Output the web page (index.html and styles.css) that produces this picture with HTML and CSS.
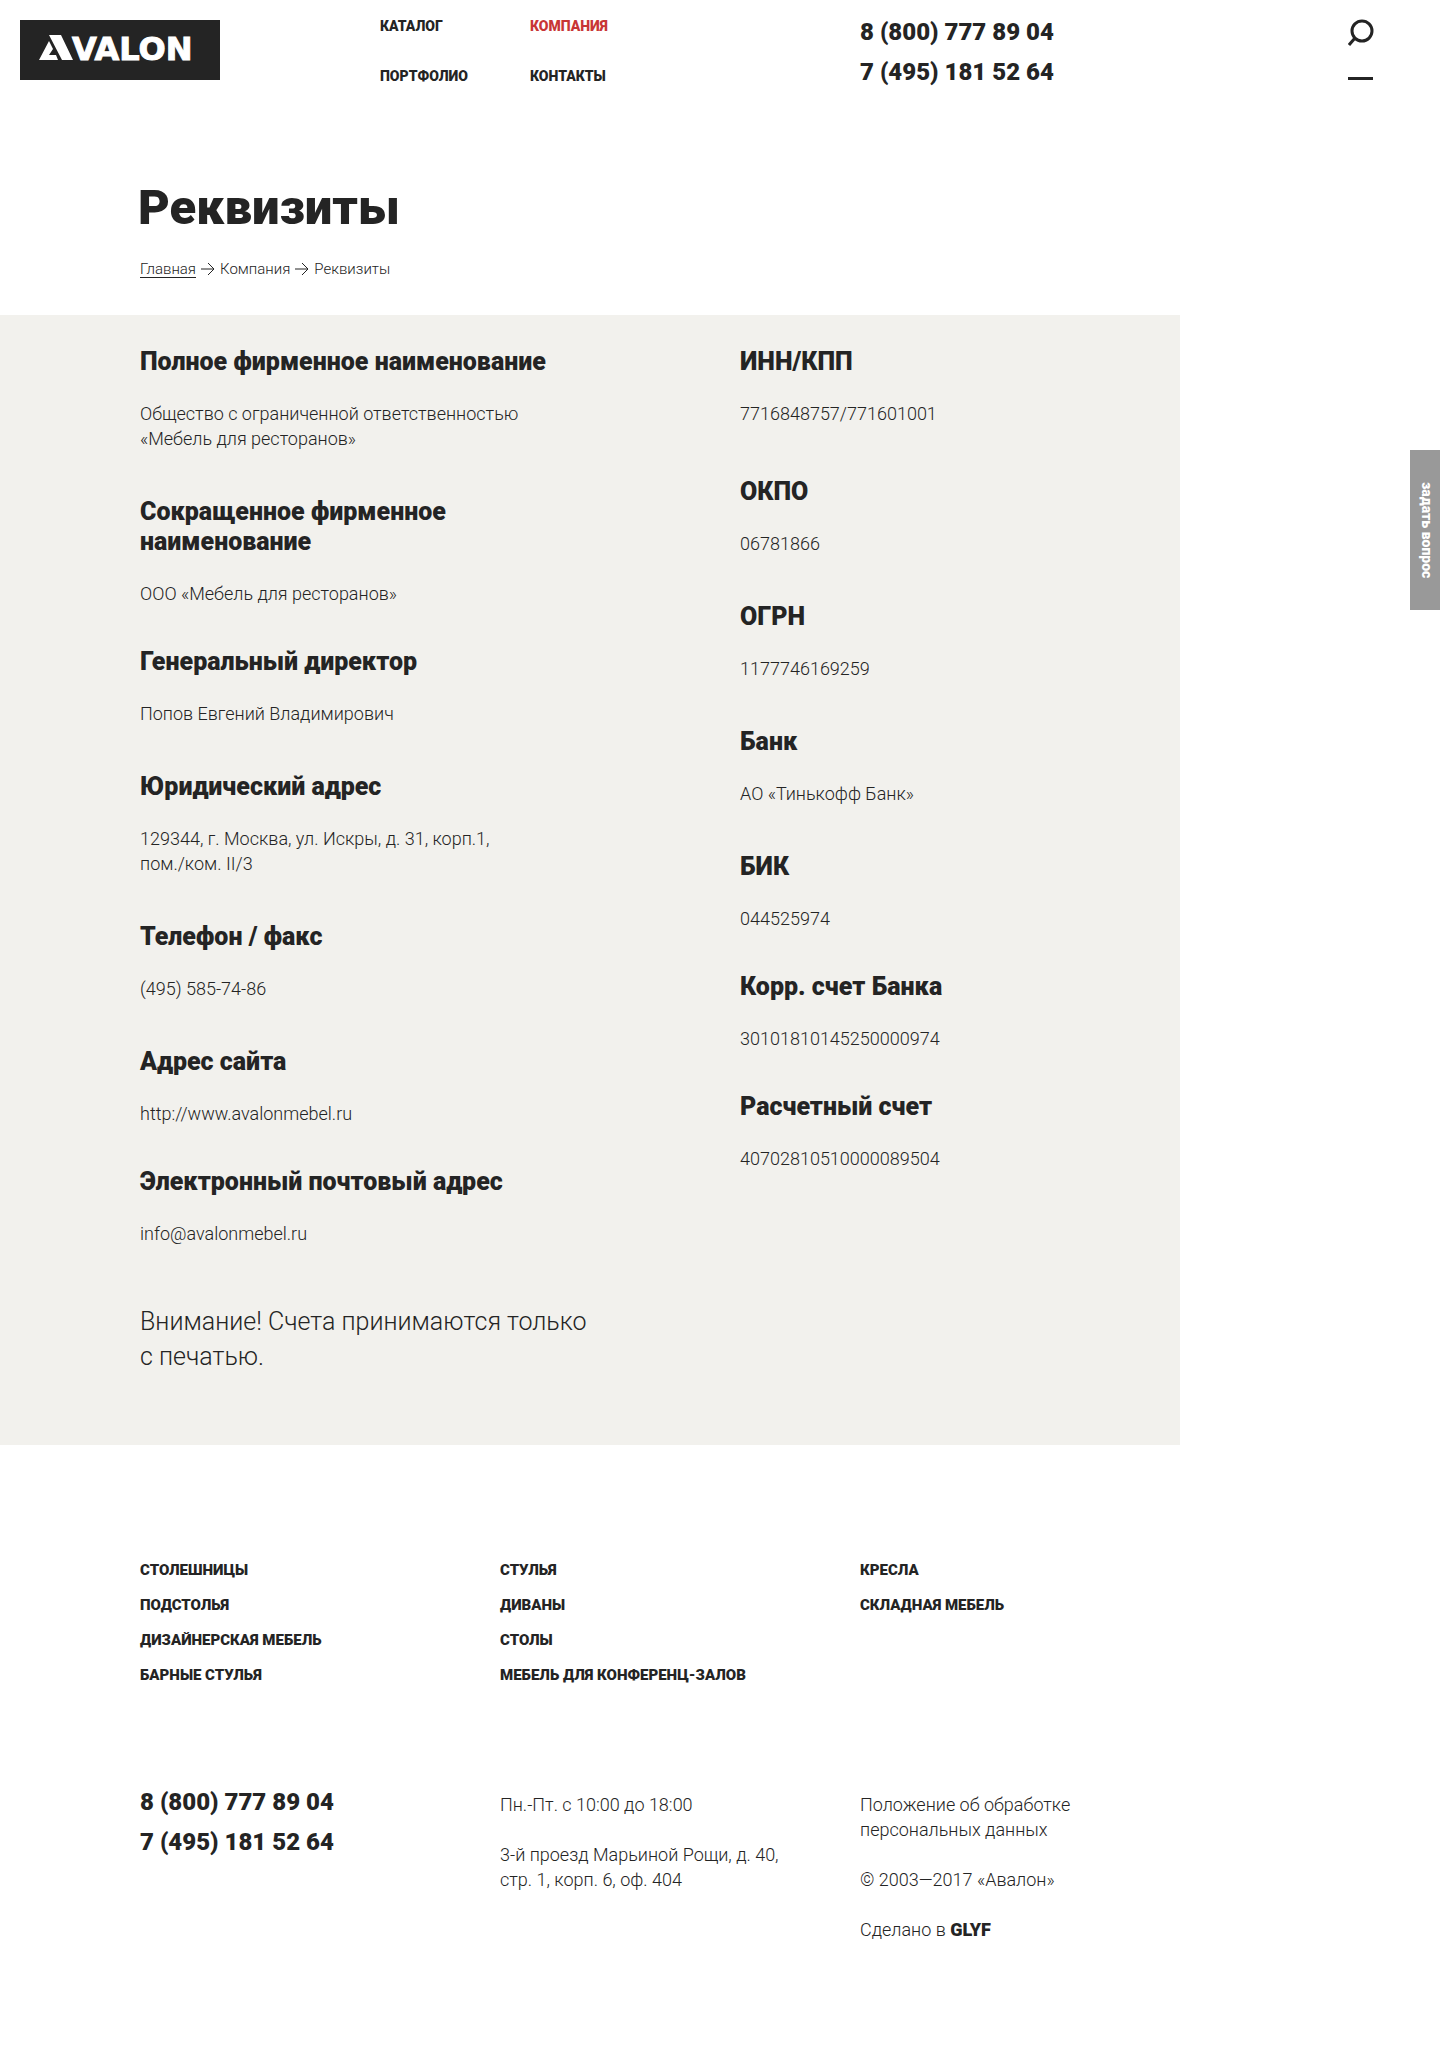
FILE: index.html
```html
<!DOCTYPE html>
<html lang="ru">
<head>
<meta charset="utf-8">
<meta name="viewport" content="width=device-width, initial-scale=1">
<title>Реквизиты</title>
<link rel="stylesheet" href="styles.css">
</head>
<body>
<header class="header">
  <a class="logo" href="#" aria-label="Avalon">
    <svg class="logo-art" viewBox="0 0 200 60" aria-hidden="true">
      <path d="M29 15H41L53 40H42ZM29 21L33 29L29 35H36L38 40H19Z" fill="#fff"/>
      <text class="logo-text" x="52" y="40">VALON</text>
    </svg>
  </a>
  <nav class="nav" aria-label="Основное меню">
    <a class="nav-link" href="#">Каталог</a>
    <a class="nav-link nav-link-active" href="#">Компания</a>
    <a class="nav-link" href="#">Портфолио</a>
    <a class="nav-link" href="#">Контакты</a>
  </nav>
  <div class="phones">
    <a class="phone" href="tel:88007778904">8 (800) 777 89 04</a>
    <a class="phone" href="tel:74951815264">7 (495) 181 52 64</a>
  </div>
  <div class="tools">
    <button class="tool" type="button" aria-label="Поиск">
      <svg width="28" height="28" viewBox="0 0 28 28" fill="none" stroke="#242424" stroke-width="3"><circle cx="14" cy="12" r="10"/><path d="M7 19L1 26"/></svg>
    </button>
    <button class="tool" type="button" aria-label="Меню"><span class="menu-bar"></span></button>
  </div>
</header>

<main>
  <div class="intro">
    <h1 class="title">Реквизиты</h1>
    <nav class="crumbs" aria-label="Навигация">
      <a class="crumb-link" href="#">Главная</a>
      <svg class="arrow" viewBox="0 0 14 14"><path d="M0 7H13M7 1L13 7L7 13"/></svg>
      <span>Компания</span>
      <svg class="arrow" viewBox="0 0 14 14"><path d="M0 7H13M7 1L13 7L7 13"/></svg>
      <span>Реквизиты</span>
    </nav>
  </div>

  <section class="details">
    <div class="columns">
      <div>
        <div class="item"><h2>Полное фирменное наименование</h2><p>Общество с ограниченной ответственностью<br>«Мебель для ресторанов»</p></div>
        <div class="item item-tight"><h2>Сокращенное фирменное<br>наименование</h2><p>ООО «Мебель для ресторанов»</p></div>
        <div class="item"><h2>Генеральный директор</h2><p>Попов Евгений Владимирович</p></div>
        <div class="item"><h2>Юридический адрес</h2><p>129344, г. Москва, ул. Искры, д. 31, корп.1,<br>пом./ком. II/3</p></div>
        <div class="item"><h2>Телефон / факс</h2><p>(495) 585-74-86</p></div>
        <div class="item item-tight"><h2>Адрес сайта</h2><p>http://www.avalonmebel.ru</p></div>
        <div class="item"><h2>Электронный почтовый адрес</h2><p>info@avalonmebel.ru</p></div>
      </div>
      <div>
        <div class="item item-loose"><h2>ИНН/КПП</h2><p>7716848757/771601001</p></div>
        <div class="item"><h2>ОКПО</h2><p>06781866</p></div>
        <div class="item"><h2>ОГРН</h2><p>1177746169259</p></div>
        <div class="item"><h2>Банк</h2><p>АО «Тинькофф Банк»</p></div>
        <div class="item item-tight"><h2>БИК</h2><p>044525974</p></div>
        <div class="item item-tight"><h2>Корр. счет Банка</h2><p>30101810145250000974</p></div>
        <div class="item"><h2>Расчетный счет</h2><p>40702810510000089504</p></div>
      </div>
    </div>
    <p class="note">Внимание! Счета принимаются только<br>с печатью.</p>
  </section>
</main>

<footer class="footer">
  <nav class="footer-grid catalog" aria-label="Каталог">
    <div class="stack">
      <a href="#">Столешницы</a>
      <a href="#">Подстолья</a>
      <a href="#">Дизайнерская мебель</a>
      <a href="#">Барные стулья</a>
    </div>
    <div class="stack">
      <a href="#">Стулья</a>
      <a href="#">Диваны</a>
      <a href="#">Столы</a>
      <a href="#">Мебель для конференц-залов</a>
    </div>
    <div class="stack">
      <a href="#">Кресла</a>
      <a href="#">Складная мебель</a>
    </div>
  </nav>
  <div class="footer-grid">
    <div class="phones">
      <a class="phone" href="tel:88007778904">8 (800) 777 89 04</a>
      <a class="phone" href="tel:74951815264">7 (495) 181 52 64</a>
    </div>
    <div class="info">
      <p>Пн.-Пт. с 10:00 до 18:00</p>
      <p>3-й проезд Марьиной Рощи, д. 40,<br>стр. 1, корп. 6, оф. 404</p>
    </div>
    <div class="info">
      <p><a href="#">Положение об обработке<br>персональных данных</a></p>
      <p>© 2003—2017 «Авалон»</p>
      <p>Сделано в <a class="maker" href="#">GLYF</a></p>
    </div>
  </div>
</footer>
<button class="ask" type="button">задать вопрос</button>
</body>
</html>
```

FILE: styles.css
```css
* { box-sizing: border-box; }

body {
  margin: 0;
  position: relative;
  background: #fff;
  color: #242424;
  font: 300 18px/25px Roboto, "Liberation Sans", sans-serif;
}

a { color: inherit; text-decoration: none; }
h1, h2, p { margin: 0; }

button {
  padding: 0;
  border: 0;
  background: none;
  color: inherit;
  font: inherit;
  cursor: pointer;
}

.header {
  display: grid;
  grid-template-columns: 360fr 480fr 488fr 92fr;
  align-items: start;
  padding: 0 0 8px 20px;
}

.logo { display: block; width: 200px; height: 60px; margin-top: 20px; background: #242424; }
.logo-art { display: block; width: 200px; height: 60px; }
.logo-text { fill: #fff; stroke: #fff; stroke-width: 1; font: bold 32px "DejaVu Sans", sans-serif; }

.nav {
  display: grid;
  grid-template-columns: 150px 150px;
  row-gap: 30px;
  padding-top: 16px;
}

.nav-link { font-size: 14px; line-height: 20px; font-weight: 900; text-transform: uppercase; }
.nav-link-active { color: #c83636; }

.phones { display: grid; justify-items: start; align-content: start; }
.header .phones { padding-top: 12px; }
.phone { font-size: 24px; line-height: 40px; font-weight: 900; }

.tools { display: grid; justify-items: start; gap: 17px; padding-top: 19px; }
.tool { display: flex; align-items: center; height: 28px; }
.tool svg { display: block; }
.menu-bar { width: 25px; height: 3px; background: #242424; }

.intro { padding: 78px 138px 36px; }
.title { font-size: 49px; line-height: 60px; font-weight: 900; }
.crumbs {
  display: flex;
  align-items: center;
  gap: 5px;
  margin-top: 21px;
  padding-left: 2px;
  font-size: 15px;
  line-height: 20px;
}
.crumb-link { height: 18px; line-height: 18px; border-bottom: 1px solid #242424; }
.arrow { width: 14px; height: 14px; fill: none; stroke: #242424; }

.details { margin-right: 260px; padding: 32px 0 71px 140px; background: #f2f1ed; }
.columns { display: grid; grid-template-columns: 600fr 440fr; }
.item { margin-bottom: 45px; }
.item-tight { margin-bottom: 40px; }
.item-loose { margin-bottom: 50px; }
.item h2 { margin-bottom: 24px; font-size: 25px; line-height: 30px; font-weight: 900; }
.item + .item { padding-top: 1px; }
.note { margin-top: 13px; font-size: 25px; line-height: 35px; }

.footer { padding: 108px 220px 113px 140px; }
.footer-grid { display: grid; grid-template-columns: repeat(3, 1fr); }
.catalog { margin-bottom: 89px; }
.stack { display: grid; justify-items: start; align-content: start; }
.stack a { font-size: 15px; line-height: 35px; font-weight: 900; text-transform: uppercase; }
.info { display: grid; align-content: start; gap: 25px; padding-top: 10px; }
.maker { font-weight: 900; }

.ask {
  position: absolute;
  top: 450px;
  right: 0;
  width: 30px;
  height: 160px;
  padding-left: 4px;
  background: #999;
  color: #fff;
  font-size: 14px;
  line-height: 26px;
  font-weight: 900;
  writing-mode: vertical-rl;
}
```
